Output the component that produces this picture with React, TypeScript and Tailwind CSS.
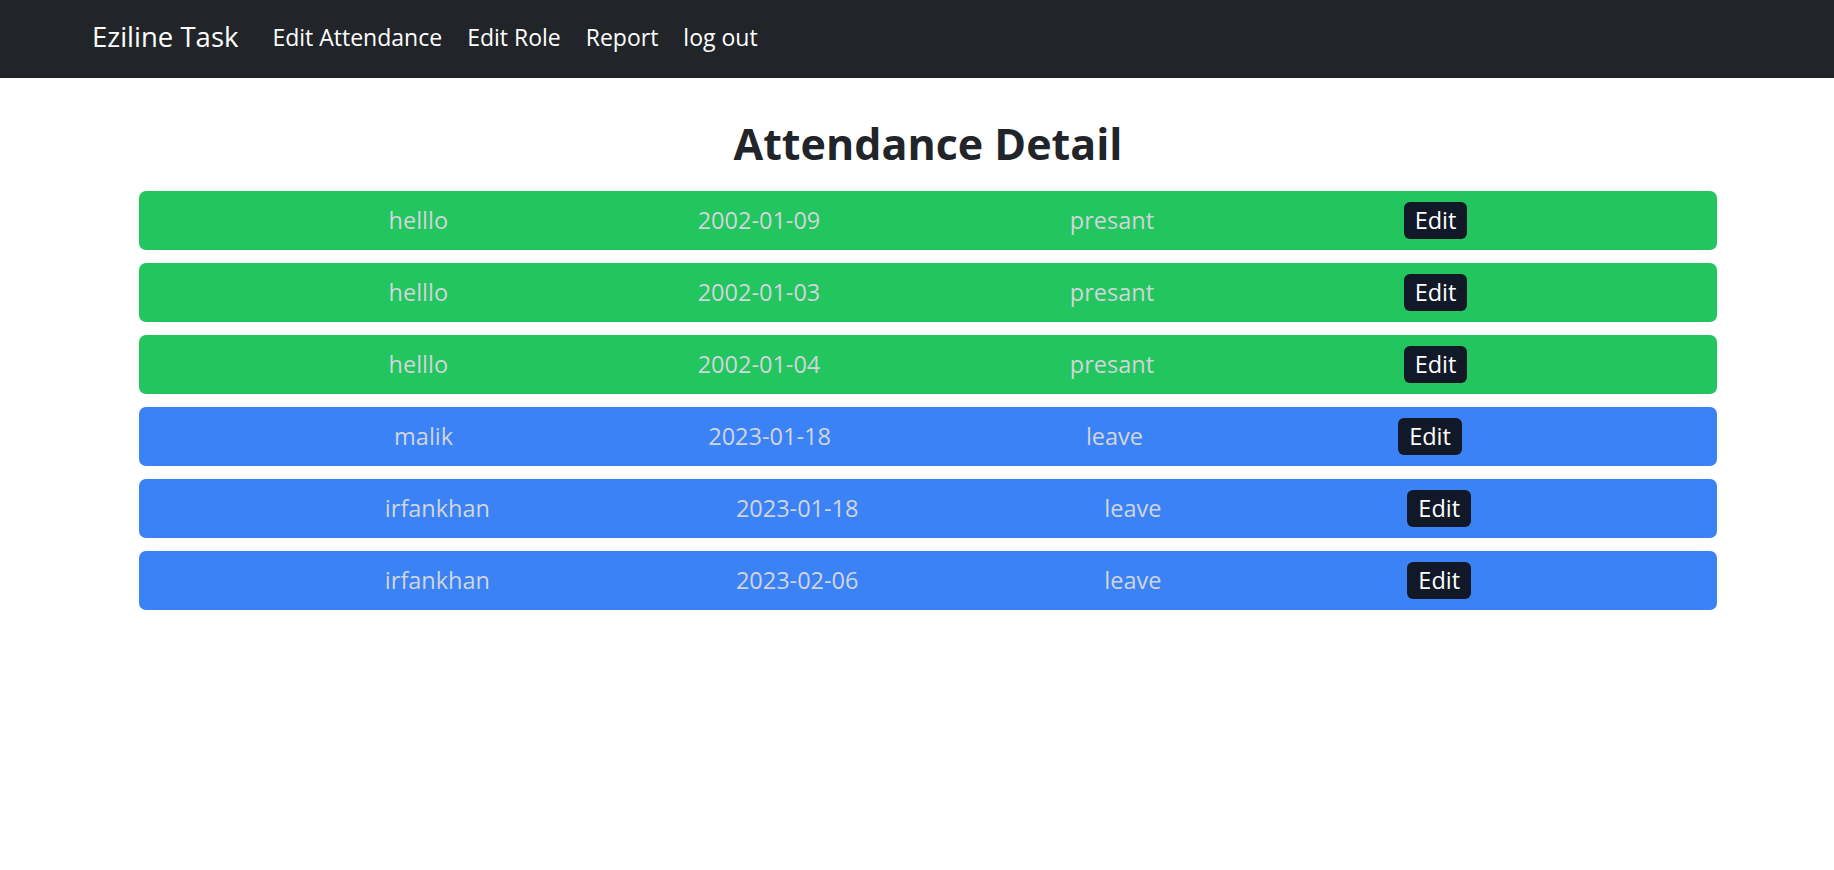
import React from "react";

type Row = { name: string; date: string; status: string; color: "green" | "blue" };

const rows: Row[] = [
  { name: "helllo", date: "2002-01-09", status: "presant", color: "green" },
  { name: "helllo", date: "2002-01-03", status: "presant", color: "green" },
  { name: "helllo", date: "2002-01-04", status: "presant", color: "green" },
  { name: "malik", date: "2023-01-18", status: "leave", color: "blue" },
  { name: "irfankhan", date: "2023-01-18", status: "leave", color: "blue" },
  { name: "irfankhan", date: "2023-02-06", status: "leave", color: "blue" },
];

export default function App() {
  return (
    <div className="min-h-[870px] bg-white" style={{ fontFamily: '"Open Sans", "Noto Sans", sans-serif' }}>
      <nav className="h-[78px] bg-[#212529] flex items-center pl-[92px] pb-[4px]">
        <span className="text-[27.5px] text-white mr-[34px]">Eziline Task</span>
        <div className="flex items-center gap-[25px] text-[23px] text-white">
          <a>Edit Attendance</a>
          <a>Edit Role</a>
          <a>Report</a>
          <a>log out</a>
        </div>
      </nav>
      <div className="ml-[139px] w-[1578px]">
        <h1 className="text-center text-[43px] font-bold text-[#212529] leading-[55px] mt-[38px] mb-[20px]">
          Attendance Detail
        </h1>
        <div className="flex flex-col gap-[13px]">
          {rows.map((r, i) => (
            <div
              key={i}
              className={
                "h-[59px] rounded-[7px] flex items-center justify-evenly text-[23.5px] text-gray-300 " +
                (r.color === "green" ? "bg-[#22c55e]" : "bg-[#3b82f6]")
              }
            >
              <span>{r.name}</span>
              <span>{r.date}</span>
              <span>{r.status}</span>
              <button className="bg-[#111827] text-white rounded-[6px] h-[37px] px-[11px] flex items-center">
                Edit
              </button>
            </div>
          ))}
        </div>
      </div>
    </div>
  );
}
